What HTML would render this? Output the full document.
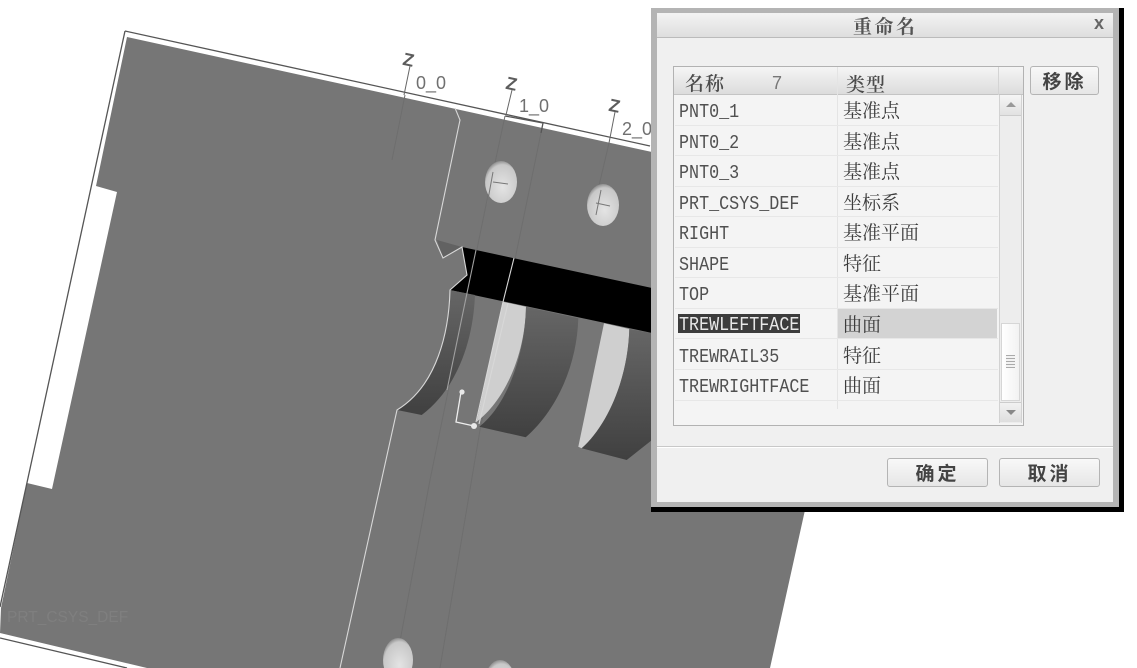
<!DOCTYPE html>
<html><head><meta charset="utf-8">
<style>
html,body{margin:0;padding:0;background:#fff;width:1137px;height:668px;overflow:hidden}
#w{position:relative;width:1137px;height:668px;overflow:hidden;font-family:"Liberation Sans","Noto Sans CJK SC",sans-serif}
svg{position:absolute;left:0;top:0;filter:blur(.35px)}
.a{position:absolute;box-sizing:border-box}
.n{position:absolute;left:679px;font:19px/20px "Liberation Mono",monospace;color:#505050;white-space:nowrap;transform:scaleX(.88);transform-origin:0 0}
.t{position:absolute;left:843px;font:19px/22px "Noto Serif CJK SC","Noto Sans CJK SC",serif;color:#3c3c3c;white-space:nowrap}
.l{position:absolute;left:675px;width:323px;height:1px;background:#e7e7e7}
.b{position:absolute;box-sizing:border-box;border:1px solid #b4b4b4;border-radius:3px;background:linear-gradient(#f8f8f8,#e6e6e6);color:#444;font:bold 19px/28px "Noto Sans CJK SC",sans-serif;text-align:center;letter-spacing:3px}
</style></head><body><div id="w">
<svg width="1137" height="668" viewBox="0 0 1137 668">
<defs>
<linearGradient id="d1" x1="0" y1="0" x2="0" y2="1"><stop offset="0" stop-color="#666"/><stop offset="1" stop-color="#404040"/></linearGradient>
<radialGradient id="h" cx=".55" cy=".62" r=".68"><stop offset="0" stop-color="#e4e4e4"/><stop offset=".78" stop-color="#c8c8c8"/><stop offset="1" stop-color="#6e6e6e"/></radialGradient>
</defs>
<polygon fill="#767676" points="127,37 652,152 1000,230 805,510 770,668 147,668 0,633 1,608 27,483 52,489 117,192 96,186"/>
<g fill="none" stroke="#555" stroke-width="1.3">
<path d="M125,31L650,146"/><path d="M125,31L0,607"/><path d="M0,638L127,668"/>
<path d="M505,116L543,123L541,133"/>
</g>
<g fill="none" stroke="#6e6e6e" stroke-width="1">
<path d="M392,160L405,95"/><path d="M505,116L486,205L430,480L395,668"/><path d="M541,133L520,235L480,430L440,668"/><path d="M609,143L598,190"/>
</g>
<polygon fill="#626262" points="437,240 462,247 443,258"/>
<polygon fill="#000" points="462,247 652,288 652,333 450,290 467,275"/>
<path fill="url(#d1)" d="M450,290L475,295C473,345 455,390 421.7,415L397,410C438,385 449,330 450,290Z"/>
<path fill="#cfcfcf" d="M502.7,301.7L526,306.7C525,355 505,400 476.7,421.7Z"/>
<path fill="url(#d1)" d="M526,306.7L578.3,318.3C577,365 557,410 525.7,437.3L479.3,426.7C507,405 525,355 526,306.7Z"/>
<path fill="#cfcfcf" d="M604,323.3L629.3,329C628,378 608,425 581.7,448.3L578.3,446.7Z"/>
<path fill="url(#d1)" d="M629.3,329L652,333.3V440L626.7,460L581.7,448.3C608,425 628,378 629.3,329Z"/>
<g fill="none" stroke="#d8d8d8" stroke-width="1.1">
<path d="M455,108L460,120L435,240L443,258L462,247L467,275L450,290C449,330 438,385 397,410L340,668"/>
<path d="M514,258L503,302L476,422"/><path d="M508,303L479,424"/>
<path d="M476,250L467,293L447,390" stroke="#a0a0a0"/>
<path d="M461,392L456,422L474,426" stroke="#eee" stroke-width="1.3"/>
</g>
<circle cx="462" cy="392" r="2.6" fill="#e8e8e8"/><circle cx="474" cy="426" r="3" fill="#e8e8e8"/>
<ellipse cx="501" cy="182" rx="16" ry="21" fill="url(#h)"/>
<ellipse cx="603" cy="205" rx="16" ry="21" fill="url(#h)"/>
<ellipse cx="398" cy="660" rx="15" ry="22" fill="url(#h)"/>
<ellipse cx="500" cy="682" rx="15" ry="22" fill="url(#h)"/>
<g fill="none" stroke="#777"><path d="M493,172L487,205M493,182L508,184M601,190L596,215M596,203L610,206"/></g>
<g font-family="Liberation Sans" font-size="18" fill="#707070">
<text x="416" y="89">0_0</text>
<text x="519" y="112">1_0</text>
<text x="622" y="135">2_0</text>
<text x="403" y="66" font-size="18" font-weight="bold" fill="#5c5c5c" transform="rotate(12 409 60)">Z</text>
<text x="506" y="90" font-size="18" font-weight="bold" fill="#5c5c5c" transform="rotate(12 512 84)">Z</text>
<text x="609" y="112" font-size="18" font-weight="bold" fill="#5c5c5c" transform="rotate(12 615 106)">Z</text>
</g>
<g stroke="#666" fill="none"><path d="M410,66L404,95M512,90L506,115M615,112L609,143"/></g>
<text x="7" y="622" font-family="Liberation Sans" font-size="15.5" fill="#7f7f7f">PRT_CSYS_DEF</text>
</svg>

<div class="a" style="left:651px;top:8px;width:473px;height:504px;background:#000"></div>
<div class="a" style="left:651px;top:8px;width:468px;height:499px;background:#b4b4b4"></div>
<div class="a" style="left:657px;top:13px;width:456px;height:489px;background:#f0f0f0"></div>
<div class="a" style="left:657px;top:13px;width:456px;height:25px;background:linear-gradient(#f3f3f3,#dedede);border-bottom:1px solid #bbb"></div>
<div class="a" style="left:853px;top:12px;font:bold 19px/27px 'Noto Serif CJK SC',serif;letter-spacing:2.5px;color:#555;white-space:nowrap">重命名</div>
<div class="a" style="left:1094px;top:14px;font:bold 18px/18px 'Liberation Sans',sans-serif;color:#666">x</div>

<div class="a" style="left:673px;top:66px;width:351px;height:360px;background:#f4f4f4;border:1px solid #b2b2b2"></div>
<div class="a" style="left:674px;top:67px;width:349px;height:28px;background:linear-gradient(#f5f5f5,#dcdcdc);border-bottom:1px solid #c4c4c4"></div>
<div class="a" style="left:837px;top:67px;width:1px;height:342px;background:#e4e4e4"></div>
<div class="a" style="left:998px;top:67px;width:1px;height:28px;background:#d4d4d4"></div>
<div class="a" style="left:685px;top:70px;font:600 19px/25px 'Noto Serif CJK SC',serif;letter-spacing:1px;color:#4c4c4c">名称</div>
<div class="a" style="left:772px;top:71px;font:18px/24px 'Liberation Sans',sans-serif;color:#777">7</div>
<div class="a" style="left:846px;top:71px;font:600 19px/25px 'Noto Serif CJK SC',serif;letter-spacing:1px;color:#4c4c4c">类型</div>

<div class="l" style="top:125px"></div><div class="l" style="top:155px"></div><div class="l" style="top:186px"></div><div class="l" style="top:216px"></div><div class="l" style="top:247px"></div><div class="l" style="top:277px"></div><div class="l" style="top:308px"></div><div class="l" style="top:338px"></div><div class="l" style="top:369px"></div><div class="l" style="top:400px"></div>

<div class="n" style="top:102px">PNT0_1</div><div class="t" style="top:99px">基准点</div>
<div class="n" style="top:133px">PNT0_2</div><div class="t" style="top:130px">基准点</div>
<div class="n" style="top:163px">PNT0_3</div><div class="t" style="top:160px">基准点</div>
<div class="n" style="top:194px">PRT_CSYS_DEF</div><div class="t" style="top:191px">坐标系</div>
<div class="n" style="top:224px">RIGHT</div><div class="t" style="top:221px">基准平面</div>
<div class="n" style="top:255px">SHAPE</div><div class="t" style="top:252px">特征</div>
<div class="n" style="top:285px">TOP</div><div class="t" style="top:282px">基准平面</div>
<div class="a" style="left:838px;top:309px;width:159px;height:29px;background:#d3d3d3"></div>
<div class="a" style="left:678px;top:314px;width:122px;height:19px;background:#3c3c3c"></div>
<div class="n" style="top:315px;color:#e8e8e8">TREWLEFTFACE</div><div class="t" style="top:313px">曲面</div>
<div class="n" style="top:347px">TREWRAIL35</div><div class="t" style="top:344px">特征</div>
<div class="n" style="top:377px">TREWRIGHTFACE</div><div class="t" style="top:374px">曲面</div>

<div class="a" style="left:999px;top:95px;width:23px;height:328px;background:#ededed;border-left:1px solid #d2d2d2;border-right:1px solid #d2d2d2"></div>
<div class="a" style="left:1000px;top:95px;width:21px;height:21px;background:linear-gradient(#f6f6f6,#e2e2e2);border-bottom:1px solid #ccc"></div>
<div class="a" style="left:1006px;top:102px;width:0;height:0;border:5px solid transparent;border-top:0;border-bottom:5px solid #999"></div>
<div class="a" style="left:1001px;top:323px;width:19px;height:78px;background:linear-gradient(90deg,#fff,#f2f2f2);border:1px solid #d6d6d6"></div>
<div class="a" style="left:1006px;top:355px;width:9px;height:13px;background:repeating-linear-gradient(#aaa 0 1px,#f2f2f2 1px 3px)"></div>
<div class="a" style="left:1000px;top:402px;width:21px;height:20px;background:linear-gradient(#f2f2f2,#dedede);border-top:1px solid #ccc"></div>
<div class="a" style="left:1006px;top:410px;width:0;height:0;border:5px solid transparent;border-bottom:0;border-top:5px solid #888"></div>

<div class="b" style="left:1030px;top:66px;width:69px;height:29px">移除</div>
<div class="a" style="left:657px;top:446px;width:456px;height:1px;background:#c8c8c8"></div>
<div class="a" style="left:657px;top:447px;width:456px;height:1px;background:#fff"></div>
<div class="b" style="left:887px;top:458px;width:101px;height:29px">确定</div>
<div class="b" style="left:999px;top:458px;width:101px;height:29px">取消</div>
</div></body></html>
